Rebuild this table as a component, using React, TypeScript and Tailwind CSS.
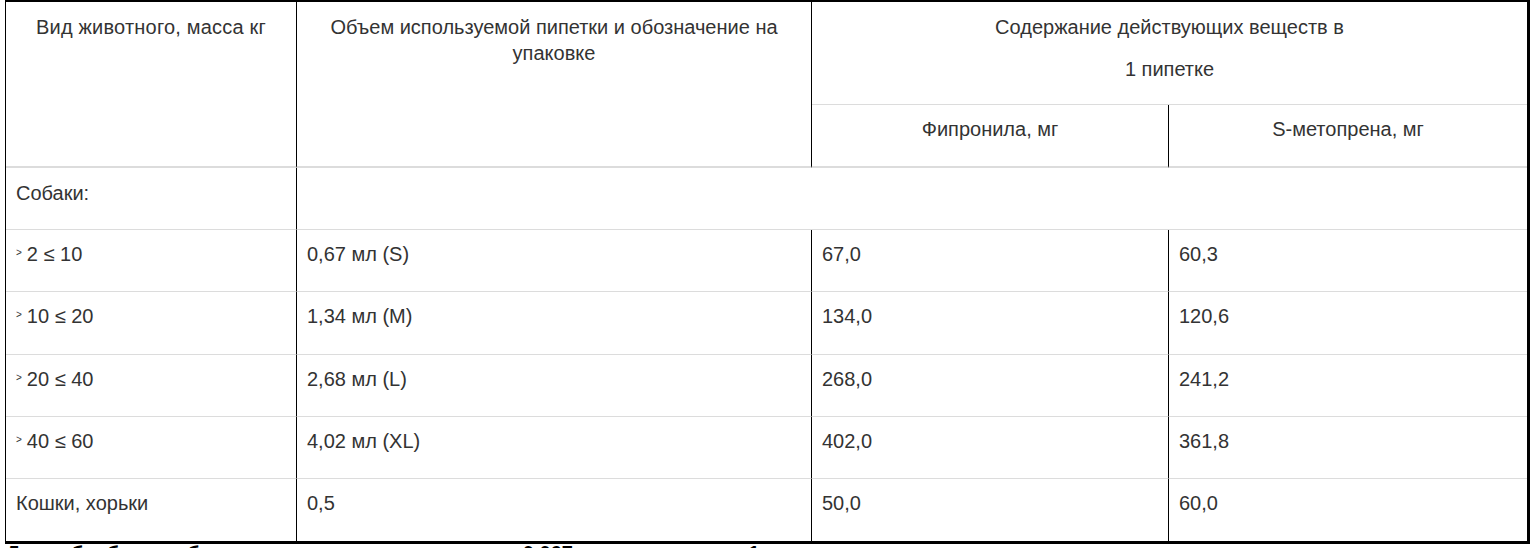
import type { ReactNode } from 'react'

const rows = [
  { kg: '2 ≤ 10', vol: '0,67 мл (S)', fip: '67,0', met: '60,3', h: 'h-[62px]' },
  { kg: '10 ≤ 20', vol: '1,34 мл (M)', fip: '134,0', met: '120,6', h: 'h-[63px]' },
  { kg: '20 ≤ 40', vol: '2,68 мл (L)', fip: '268,0', met: '241,2', h: 'h-[62px]' },
  { kg: '40 ≤ 60', vol: '4,02 мл (XL)', fip: '402,0', met: '361,8', h: 'h-[62px]' },
]

function Cell({ children, className = '' }: { children?: ReactNode; className?: string }) {
  return <div className={`px-[10px] pt-[12px] leading-6 ${className}`}>{children}</div>
}

export default function App() {
  return (
    <div className="w-[1534px] h-[548px] overflow-hidden bg-white text-[20px] text-[#333] font-['Liberation_Sans',Arial,sans-serif]">
      <div className="ml-[5px] w-[1525px] border-l border-t-2 border-r-[3px] border-b-[3px] border-black">
        <div className="grid grid-cols-[291px_515px_357px_358px]">
          {/* Header */}
          <div className="row-span-2 border-r border-r-black border-b-2 border-b-[#dcdcdc] pt-[12px] text-center leading-[26px] tracking-[0.2px]">
            Вид животного, масса кг
          </div>
          <div className="row-span-2 border-r border-r-black border-b-2 border-b-[#dcdcdc] pt-[12px] px-[16px] text-center leading-[26px]">
            Объем используемой пипетки и обозначение на упаковке
          </div>
          <div className="col-span-2 h-[103px] border-b border-b-[#dcdcdc] pt-[13px] text-center leading-6">
            <p>Содержание действующих веществ в</p>
            <p className="mt-[18px]">1 пипетке</p>
          </div>
          <div className="h-[63px] border-r border-r-black border-b-2 border-b-[#dcdcdc] pt-[12px] text-center leading-6">
            Фипронила, мг
          </div>
          <div className="h-[63px] border-b-2 border-b-[#dcdcdc] pt-[12px] text-center leading-6">
            S-метопрена, мг
          </div>

          {/* Собаки */}
          <Cell className="h-[62px] border-r border-r-black border-b border-b-[#dcdcdc] pt-[13px]">Собаки:</Cell>
          <div className="col-span-3 h-[62px] border-b border-b-[#dcdcdc]" />

          {rows.map((r) => (
            <div key={r.kg} className="contents">
              <Cell className={`${r.h} border-r border-r-black border-b border-b-[#dcdcdc]`}>
                <span className="relative -top-[5px] mr-[5px] text-[10px]">&gt;</span>
                {r.kg}
              </Cell>
              <Cell className={`${r.h} border-r border-r-black border-b border-b-[#dcdcdc]`}>{r.vol}</Cell>
              <Cell className={`${r.h} border-r border-r-black border-b border-b-[#dcdcdc]`}>{r.fip}</Cell>
              <Cell className={`${r.h} border-b border-b-[#dcdcdc]`}>{r.met}</Cell>
            </div>
          ))}

          <Cell className="h-[62px] border-r border-r-black">Кошки, хорьки</Cell>
          <Cell className="h-[62px] border-r border-r-black">0,5</Cell>
          <Cell className="h-[62px] border-r border-r-black">50,0</Cell>
          <Cell className="h-[62px]">60,0</Cell>
        </div>
      </div>
      <p className="-mt-[1px] pl-[6px] text-[20px] font-bold leading-5 text-black">
        Доза обработки: объем пипетки рассчитан из дозы 0,067 мл препарата на 1 кг массы животного
      </p>
    </div>
  )
}
